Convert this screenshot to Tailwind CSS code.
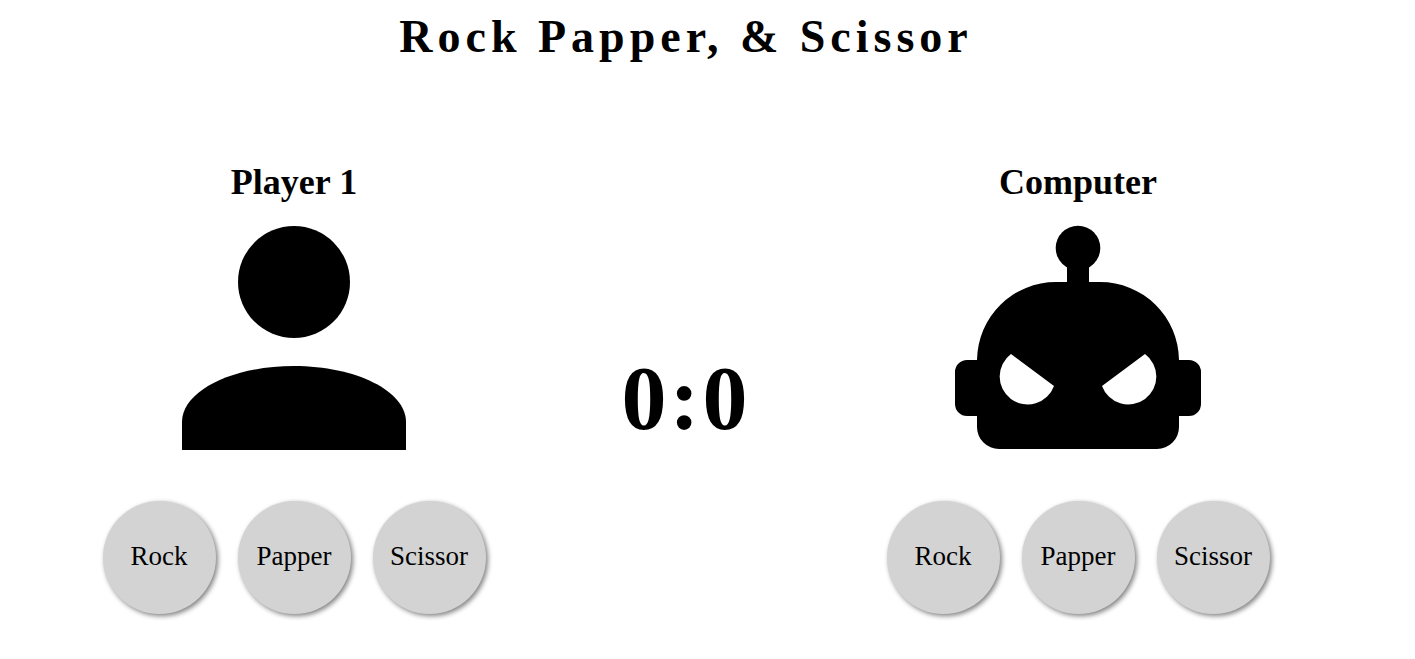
<!DOCTYPE html>
<html lang="en">
<head>
<meta charset="utf-8">
<title>Rock Papper, &amp; Scissor</title>
<script src="https://cdn.jsdelivr.net/npm/@tailwindcss/browser@4"></script>
</head>
<body class="bg-white text-black font-['Liberation_Serif',serif]">
<main class="pr-[43px] pb-10">
<h1 class="pt-[11px] text-center text-[46px] leading-[52px] font-bold tracking-[5px]">Rock Papper, &amp; Scissor</h1>
<div class="mt-[98px] grid grid-cols-[1fr_196px_1fr]">
<section class="flex flex-col items-center">
<h2 class="text-[36px] leading-[42px] font-bold">Player 1</h2>
<svg class="mt-[9px] size-[248px]" viewBox="0 0 248 248" aria-hidden="true"><circle cx="124" cy="70" r="56"/><path d="M12 238v-28c0-31 50-56 112-56s112 25 112 56v28z"/></svg>
<div class="mt-[41px] flex gap-[22px]">
<button class="size-[113px] rounded-full bg-[#d3d3d3] pb-0.5 text-[27px] shadow-[2px_2px_5px_gray]">Rock</button>
<button class="size-[113px] rounded-full bg-[#d3d3d3] pb-0.5 text-[27px] shadow-[2px_2px_5px_gray]">Papper</button>
<button class="size-[113px] rounded-full bg-[#d3d3d3] pb-0.5 text-[27px] shadow-[2px_2px_5px_gray]">Scissor</button>
</div>
</section>
<p class="pt-[188px] text-center text-[90px] leading-[100px] font-bold tracking-[3px]">0:0</p>
<section class="flex flex-col items-center">
<h2 class="text-[36px] leading-[42px] font-bold">Computer</h2>
<svg class="mt-[9px] size-[248px]" viewBox="0 0 248 248" aria-hidden="true"><circle cx="124" cy="36" r="22.3"/><path d="M113 50h22v25h-22z"/><path fill-rule="evenodd" d="M102 70h44a79 79 0 0 1 79 78h10a12 12 0 0 1 12 12v32a12 12 0 0 1-12 12h-10v11a22 22 0 0 1-22 22H45a22 22 0 0 1-22-22v-11H13a12 12 0 0 1-12-12v-32a12 12 0 0 1 12-12h10a79 79 0 0 1 79-78zM57 142a28 28 0 1 0 43 32zM191 142a28 28 0 1 1-43 32z"/></svg>
<div class="mt-[41px] flex gap-[22px]">
<button class="size-[113px] rounded-full bg-[#d3d3d3] pb-0.5 text-[27px] shadow-[2px_2px_5px_gray]">Rock</button>
<button class="size-[113px] rounded-full bg-[#d3d3d3] pb-0.5 text-[27px] shadow-[2px_2px_5px_gray]">Papper</button>
<button class="size-[113px] rounded-full bg-[#d3d3d3] pb-0.5 text-[27px] shadow-[2px_2px_5px_gray]">Scissor</button>
</div>
</section>
</div>
</main>
</body>
</html>
